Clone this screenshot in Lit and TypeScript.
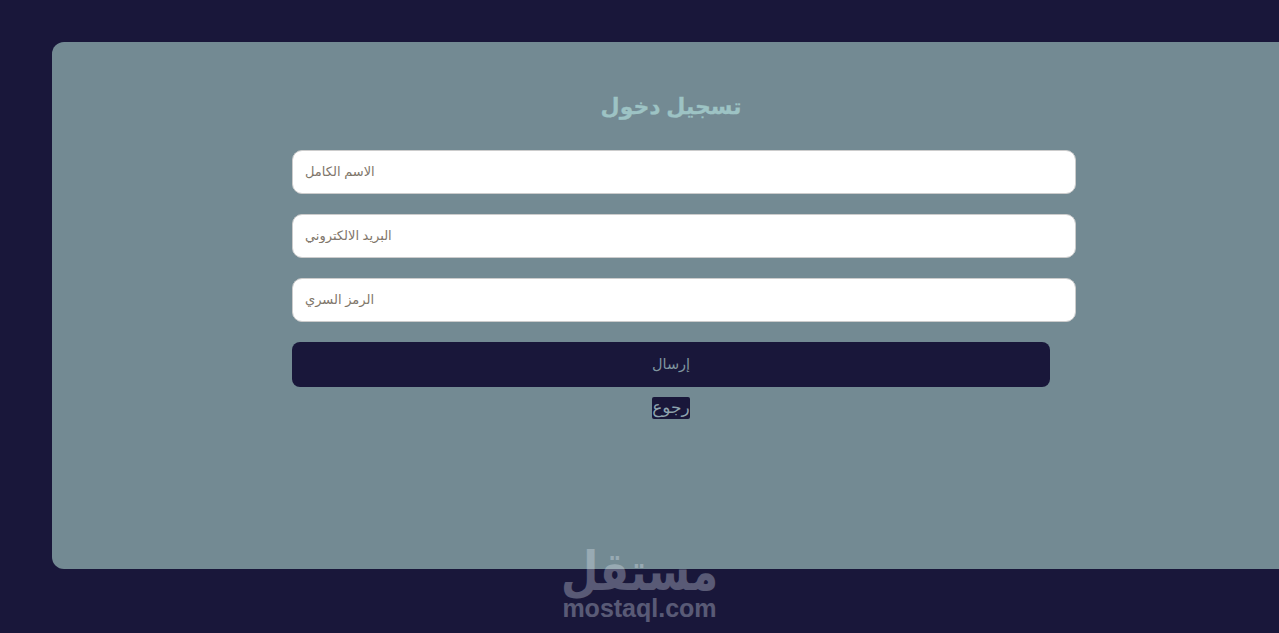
import { LitElement, html, css } from "lit";
import { customElement } from "lit/decorators.js";

@customElement("app-root")
export class AppRoot extends LitElement {
  static styles = css`
    :host {
      display: block;
      height: 633px;
      overflow: hidden;
      position: relative;
      background: #19173a;
      font-family: "Liberation Sans", "DejaVu Sans", sans-serif;
    }
    .card {
      box-sizing: border-box;
      width: 1238px;
      height: 527px;
      margin: 42px 0 0 52px;
      padding: 46px 240px 0;
      background: #738a93;
      border-radius: 12px;
      display: flex;
      flex-direction: column;
      align-items: flex-start;
    }
    h1 {
      align-self: center;
      margin: 0 0 28px;
      font-size: 22px;
      line-height: 34px;
      font-weight: 700;
      color: #9dc3c4;
      -webkit-text-stroke: 0.3px #9dc3c4;
      font-family: "Noto Sans", "DejaVu Sans", sans-serif;
    }
    form {
      display: flex;
      flex-direction: column;
      gap: 20px;
      width: 100%;
    }
    input {
      box-sizing: border-box;
      width: 784px;
      height: 44px;
      padding: 0 12px 2px;
      border: 1px solid #ccc;
      border-radius: 10px;
      background: #fff;
      font: 13px "Liberation Sans", "DejaVu Sans", sans-serif;
      outline: none;
    }
    input::placeholder {
      color: #80766a;
    }
    .submit {
      height: 45px;
      border: 0;
      padding: 0 0 2px;
      border-radius: 8px;
      background: #19173a;
      color: #80969f;
      font: 14.5px "Liberation Sans", "DejaVu Sans", sans-serif;
    }
    .back {
      align-self: center;
      margin-top: 10px;
      height: 22px;
      width: 38px;
      padding: 0;
      border: 0;
      border-radius: 2px;
      background: #19173a;
      color: #8ea4ae;
      font: 17px/22px "Liberation Sans", "DejaVu Sans", sans-serif;
      white-space: nowrap;
      display: flex;
      justify-content: center;
    }
    .mark {
      position: absolute;
      left: 562px;
      top: 547px;
      width: 155px;
      display: flex;
      flex-direction: column;
      align-items: center;
      color: #eef6ff;
      opacity: 0.3;
      font-weight: 700;
      pointer-events: none;
    }
    .mark .ar {
      display: block;
      margin: 5px 0;
      font: 700 43px/38px "DejaVu Sans", sans-serif;
      transform: scaleY(1.24);
    }
    .mark .en {
      font: 700 25px/26px "Liberation Sans", sans-serif;
    }
  `;

  render() {
    return html`
      <div class="card">
        <h1>تسجيل دخول</h1>
        <form @submit=${(e: Event) => e.preventDefault()}>
          <input type="text" placeholder="الاسم الكامل" />
          <input type="email" placeholder="البريد الالكتروني" />
          <input type="password" placeholder="الرمز السري" />
          <button class="submit" type="submit">إرسال</button>
        </form>
        <button class="back" type="button">رجوع</button>
      </div>
      <div class="mark" aria-hidden="true">
        <span class="ar">مستقل</span>
        <span class="en">mostaql.com</span>
      </div>
    `;
  }
}
